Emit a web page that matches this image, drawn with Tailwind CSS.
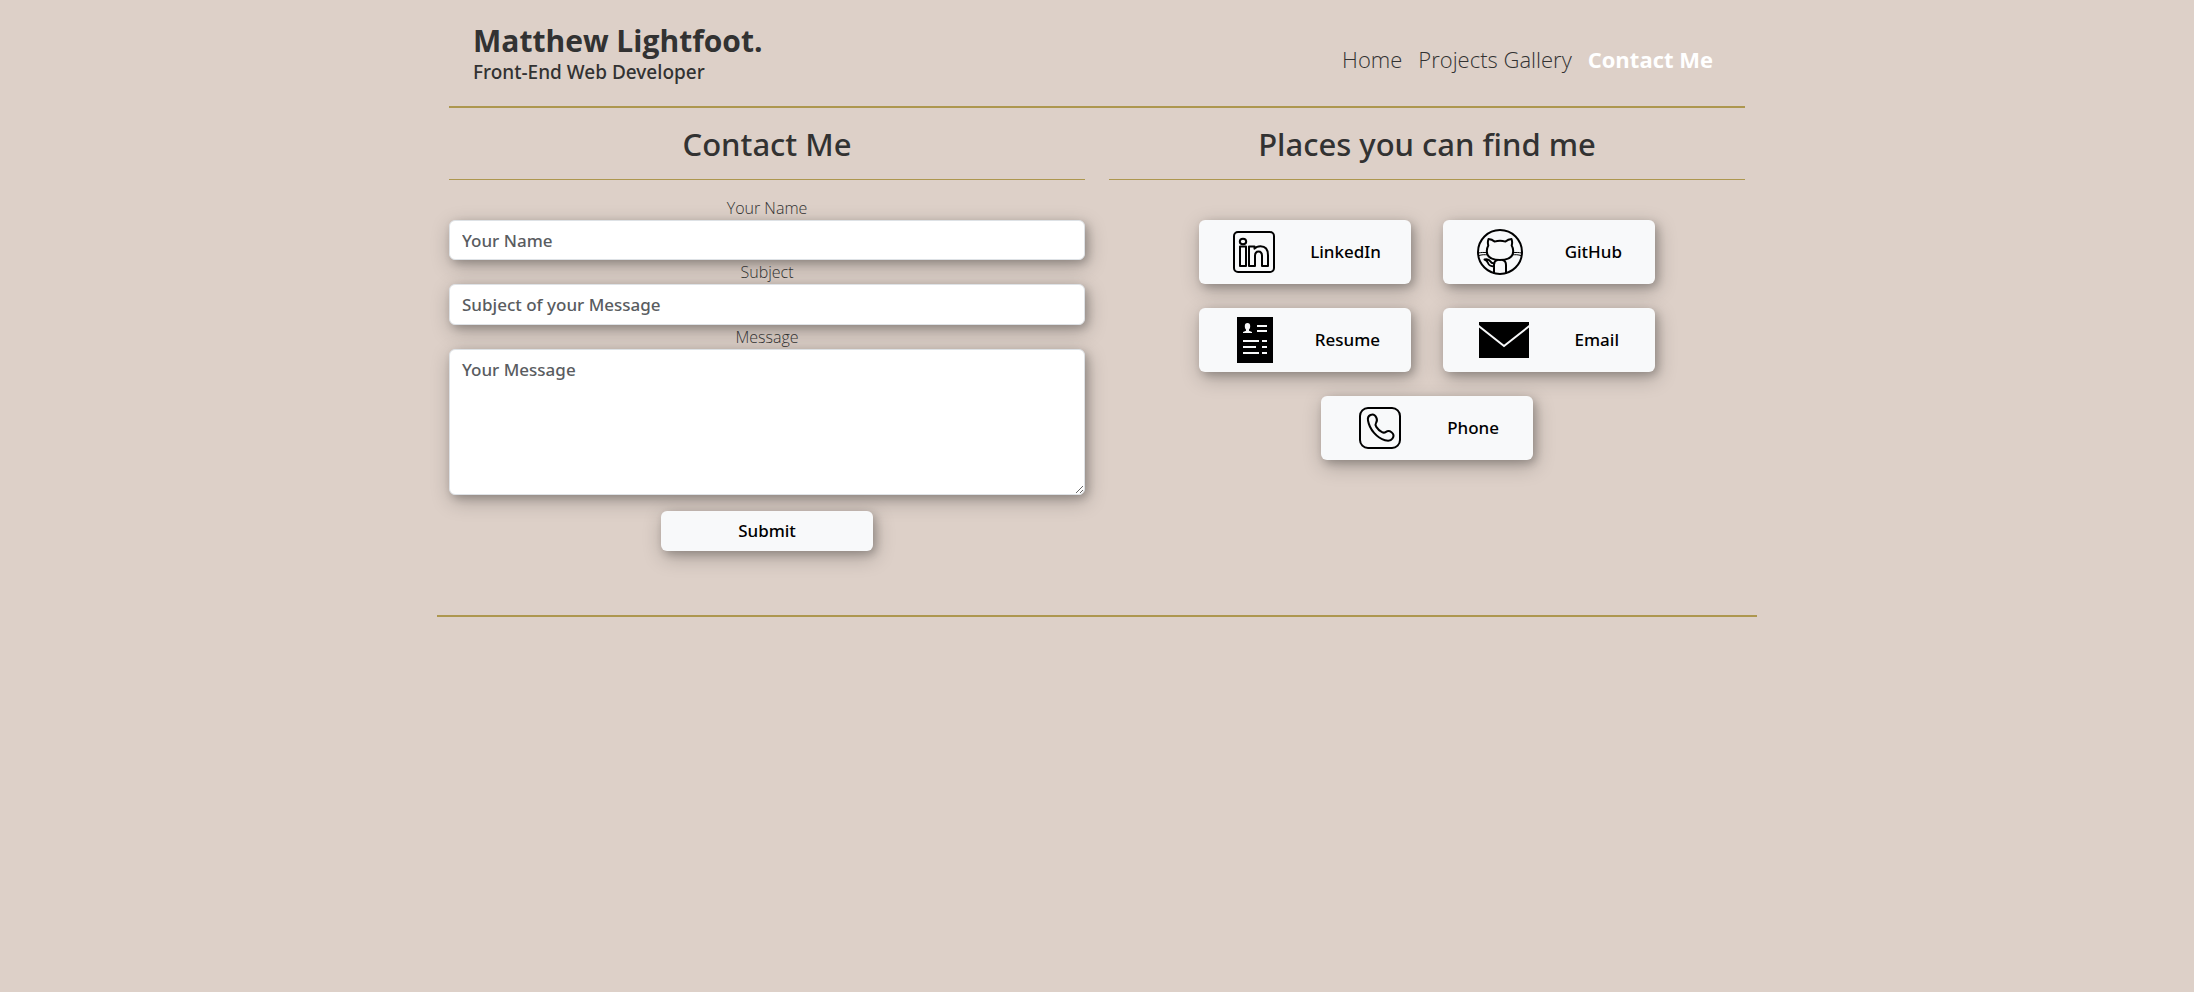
<!DOCTYPE html>
<html lang="en">
<head>
<meta charset="utf-8">
<meta name="viewport" content="width=device-width, initial-scale=1">
<title>Contact Me | Matthew Lightfoot</title>
<script src="https://cdn.jsdelivr.net/npm/@tailwindcss/browser@4"></script>
</head>
<body class="min-h-screen bg-[#ddd0c8] font-['Noto_Sans','Open_Sans',sans-serif] text-[#323232]">
<div class="mx-auto max-w-[1320px] border-b-2 border-[#ad974f] px-3 pb-16">
  <header class="flex flex-wrap items-center justify-between border-b-2 border-[#ad974f] px-6 pt-5 pb-5">
    <div>
      <h1 class="font-['Open_Sans',sans-serif] text-[30px] leading-[42px] font-bold">Matthew Lightfoot.</h1>
      <p class="-mt-1 text-[19px] leading-7 font-medium">Front-End Web Developer</p>
    </div>
    <nav class="flex gap-4 pt-3 pr-2 font-['Open_Sans',sans-serif] text-[22px] leading-8 font-light">
      <a href="#home">Home</a>
      <a href="#projects">Projects Gallery</a>
      <a href="#contact" class="font-bold text-white" aria-current="page">Contact Me</a>
    </nav>
  </header>
  <main class="grid gap-6 lg:grid-cols-2">
    <section>
      <h2 class="border-b border-[#ad974f] pt-[17px] pb-[15px] text-center text-[31px] leading-[39px] font-medium">Contact Me</h2>
      <form class="flex flex-col pt-4">
        <label for="name" class="text-center font-['Open_Sans',sans-serif] text-base leading-6 font-light">Your Name</label>
        <input id="name" type="text" placeholder="Your Name" class="h-10 rounded-md border border-[#dee2e6] bg-white px-3 text-[17px] font-medium shadow-[3px_3px_8px_rgb(0_0_0/0.2),2px_6px_20px_rgb(0_0_0/0.25)] placeholder:text-[#595c5f]">
        <label for="subject" class="text-center font-['Open_Sans',sans-serif] text-base leading-6 font-light">Subject</label>
        <input id="subject" type="text" placeholder="Subject of your Message" class="h-[41px] rounded-md border border-[#dee2e6] bg-white px-3 text-[17px] font-medium shadow-[3px_3px_8px_rgb(0_0_0/0.2),2px_6px_20px_rgb(0_0_0/0.25)] placeholder:text-[#595c5f]">
        <label for="message" class="text-center font-['Open_Sans',sans-serif] text-base leading-6 font-light">Message</label>
        <textarea id="message" placeholder="Your Message" class="h-[146px] resize-y rounded-md border border-[#dee2e6] bg-white px-3 py-2 text-[17px] leading-6 font-medium shadow-[3px_3px_8px_rgb(0_0_0/0.2),2px_6px_20px_rgb(0_0_0/0.25)] placeholder:text-[#595c5f]"></textarea>
        <button type="submit" class="mt-4 h-10 w-[212px] self-center rounded-md bg-[#f8f9fa] text-[17px] font-medium text-black shadow-[3px_3px_8px_rgb(0_0_0/0.2),2px_6px_20px_rgb(0_0_0/0.25)]">Submit</button>
      </form>
    </section>
    <section>
      <h2 class="border-b border-[#ad974f] pt-[17px] pb-[15px] text-center text-[31px] leading-[39px] font-medium">Places you can find me</h2>
      <div class="mx-auto flex max-w-[460px] flex-wrap justify-center gap-x-8 gap-y-6 pt-10 text-[17px] font-medium text-black">
        <a href="#linkedin" class="flex h-16 w-[212px] items-center justify-between rounded-md bg-[#f8f9fa] pr-[30px] pl-[34px] shadow-[3px_3px_8px_rgb(0_0_0/0.2),2px_6px_20px_rgb(0_0_0/0.25)]">
          <svg class="size-[42px]" viewBox="0 0 42 42" fill="none" stroke="#000" stroke-width="2" stroke-linejoin="round" aria-hidden="true">
            <rect x="1" y="1" width="40" height="40" rx="4"/>
            <ellipse cx="10" cy="10.5" rx="3.2" ry="2.8"/>
            <path d="M7 15.500h6v19.500H7zM16 15.500h5.500v2.200c1.500-1.800 3.600-2.500 6-2.500 5 0 7.500 3.200 7.500 9v10.800h-6v-10c0-3-1.200-4.500-3.500-4.500s-3.500 1.600-3.500 4.500v10h-6z"/>
          </svg>
          <span>LinkedIn</span>
        </a>
        <a href="#github" class="flex h-16 w-[212px] items-center justify-between rounded-md bg-[#f8f9fa] pr-[33px] pl-[34px] shadow-[3px_3px_8px_rgb(0_0_0/0.2),2px_6px_20px_rgb(0_0_0/0.25)]">
          <svg class="size-[46px]" viewBox="0 0 46 46" fill="none" stroke="#000" stroke-width="2" stroke-linecap="round" stroke-linejoin="round" aria-hidden="true">
            <circle cx="23" cy="23" r="22"/>
            <path d="M11.500 10c2.500.2 4.600 1.300 6 2.600 3.500-1 7.500-1 11 0 1.500-1.300 3.500-2.400 6-2.600.8 2.300.8 4.600.2 6.500 1 1.700 1.500 3.200 1.500 5.500 0 6-4.500 9-13.200 9S9.800 28 9.800 22c0-2.300.5-3.800 1.500-5.500-.6-1.900-.6-4.200.2-6.500z"/>
            <path d="M17 44V36c0-2.500 1.500-4.500 3.500-5M29 44V36c0-2.500-1.500-4.500-3.500-5M17 37.500c-4 0-5-1-6-3.500-.6-1.500-1.600-2.800-3.500-3.500 3-.8 4.800.2 6 2 .8 1.400 2 2 4 1.600"/>
            <path stroke-width="1" d="M1.500 24c3-.7 5.500-.7 8.500-.3M2 26.500c3-.9 5.500-1 8.600-.6M44.500 24c-3-.7-5.500-.7-8.500-.3M44 26.500c-3-.9-5.500-1-8.600-.6"/>
          </svg>
          <span>GitHub</span>
        </a>
        <a href="#resume" class="flex h-16 w-[212px] items-center justify-between rounded-md bg-[#f8f9fa] pr-[31px] pl-[38px] shadow-[3px_3px_8px_rgb(0_0_0/0.2),2px_6px_20px_rgb(0_0_0/0.25)]">
          <svg class="h-[46px] w-9" viewBox="0 0 36 46" aria-hidden="true">
            <path d="M0 0h36v46H0z"/>
            <path fill="#f8f9fa" d="M10.500 6c1.800 0 2.700 1.200 2.700 3.200 0 1.400-.5 2.600-1.200 3.300v1.200l3 1.300v1H6v-1l3-1.300v-1.200c-.7-.7-1.200-1.900-1.200-3.300C7.800 7.200 8.700 6 10.500 6zM20 8h10v2H20zM20 13h10v2H20zM6 23h16v2H6zM25 23h5v2h-5zM6 29h13v2H6zM25 29h5v2h-5zM6 35h16v2H6zM25 35h5v2h-5z"/>
          </svg>
          <span>Resume</span>
        </a>
        <a href="#email" class="flex h-16 w-[212px] items-center justify-between rounded-md bg-[#f8f9fa] pr-9 pl-9 shadow-[3px_3px_8px_rgb(0_0_0/0.2),2px_6px_20px_rgb(0_0_0/0.25)]">
          <svg class="h-9 w-[50px]" viewBox="0 0 50 36" aria-hidden="true">
            <path d="M0 0h50v36H0z"/>
            <path fill="none" stroke="#f8f9fa" stroke-width="2" d="M-1 3.500l26 20.500 26-20.500"/>
          </svg>
          <span>Email</span>
        </a>
        <a href="#phone" class="flex h-16 w-[212px] items-center justify-between rounded-md bg-[#f8f9fa] pr-[34px] pl-[38px] shadow-[3px_3px_8px_rgb(0_0_0/0.2),2px_6px_20px_rgb(0_0_0/0.25)]">
          <svg class="size-[42px]" viewBox="0 0 42 42" fill="none" stroke="#000" stroke-width="2" stroke-linejoin="round" aria-hidden="true">
            <rect x="1" y="1" width="40" height="40" rx="8"/>
            <path d="M11.500 8c2.500-1 4.500-.2 5.800 2.500 1.200 2.500.8 4-.3 5.500-.9 1.300-.6 2.500.3 3.900 1.600 2.400 3.500 4.300 5.700 5.300 1.500.7 2.800.5 4-.3 1.800-1.200 3.700-1 5.500.3 2.500 1.800 2.500 4 1 6.300-1.300 2-4 2.600-7.500 1.700C18 31 10.500 22.500 9 13.500c-.5-2.800.5-4.600 2.500-5.500z"/>
          </svg>
          <span>Phone</span>
        </a>
      </div>
    </section>
  </main>
</div>
</body>
</html>
